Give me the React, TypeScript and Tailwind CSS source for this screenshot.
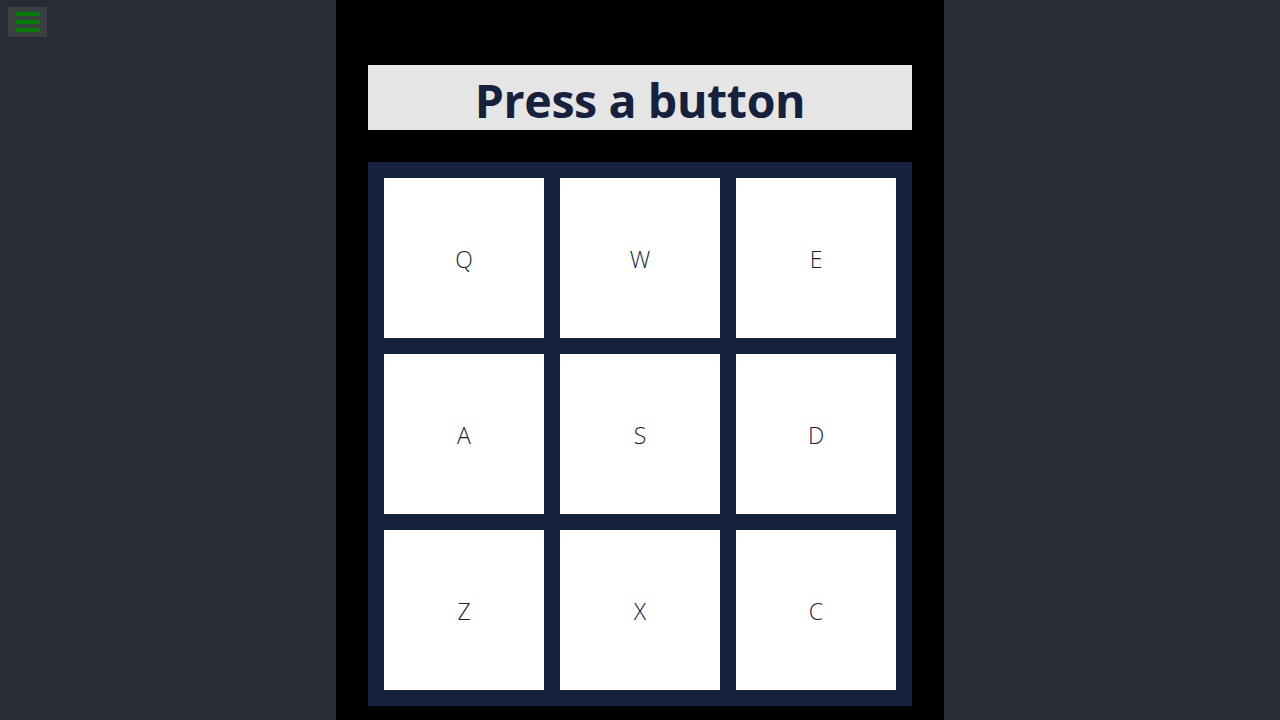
import React from "react";

const keys = ["Q", "W", "E", "A", "S", "D", "Z", "X", "C"];

export default function App() {
  return (
    <div
      className="relative flex h-[720px] w-full justify-center overflow-hidden bg-[#282c34]"
      style={{ fontFamily: '"Open Sans", "Noto Sans", sans-serif' }}
    >
      <button className="absolute left-[8px] top-[7px] flex h-[30px] w-[39px] flex-col items-center justify-center gap-[4px] bg-[#3b3e42]">
        <span className="block h-[4px] w-[25px] rounded-[1px] bg-[#008000]" />
        <span className="block h-[4px] w-[25px] rounded-[1px] bg-[#008000]" />
        <span className="block h-[4px] w-[25px] rounded-[1px] bg-[#008000]" />
      </button>
      <div className="flex h-full w-[608px] flex-col items-center bg-black px-[32px] pt-[65px]">
        <div className="flex h-[65px] w-[544px] items-center justify-center bg-[#e5e5e5] pt-[5px]">
          <h1 className="text-[46.5px] font-bold leading-none tracking-[-0.4px] text-[#16213e]">
            Press a button
          </h1>
        </div>
        <div className="mt-[32px] grid w-[544px] grid-cols-3 gap-[16px] bg-[#16213e] p-[16px]">
          {keys.map((k) => (
            <div
              key={k}
              className="flex h-[160px] w-[160px] items-center justify-center bg-white pt-[2px] text-[23px] font-[350] text-[#16213e]"
            >
              {k}
            </div>
          ))}
        </div>
      </div>
    </div>
  );
}
